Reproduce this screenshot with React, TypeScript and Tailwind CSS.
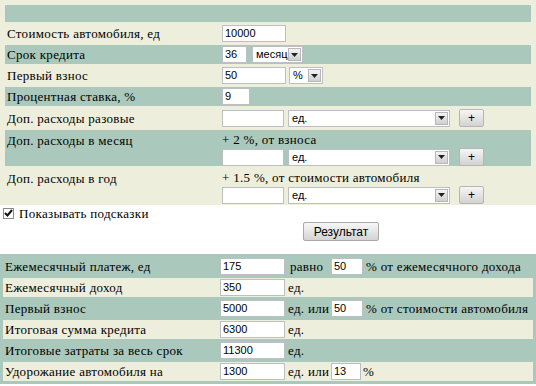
import React from "react";

const teal = "bg-[#aac8bb]";
const cream = "bg-[#eeeedd]";
const sans = "font-[Arial]";
const serif = "font-['Liberation_Serif']";

function Input({ value = "", w }: { value?: string; w: string }) {
  return (
    <div
      className={`${w} h-[17px] bg-white border border-[#bcc0c4] px-[2px] text-[11px] leading-[15px] text-black ${sans} shrink-0`}
    >
      {value}
    </div>
  );
}

function Select({ value, w }: { value: string; w: string }) {
  return (
    <div
      className={`${w} h-[17px] bg-white border border-[#bcc0c4] flex items-center justify-between pl-[3px] pr-[1px] shrink-0`}
    >
      <span className={`text-[11px] leading-[15px] ${sans} text-black`}>{value}</span>
      <span className="w-[13px] h-[13px] bg-gradient-to-b from-[#f4f4f4] to-[#cfcfcf] border border-[#b8b8b8] flex items-center justify-center">
        <svg width="7" height="4" viewBox="0 0 7 4">
          <path d="M0 0h7L3.5 4z" fill="#222" />
        </svg>
      </span>
    </div>
  );
}

function PlusBtn() {
  return (
    <div
      className={`w-[25px] h-[18px] ml-[5px] bg-gradient-to-b from-[#f6f6f6] to-[#d2d2d2] border border-[#b6b6b6] rounded-[2px] flex items-center justify-center text-[12px] ${sans} text-black shrink-0`}
    >
      +
    </div>
  );
}

function Txt({ children, cls = "" }: { children: React.ReactNode; cls?: string }) {
  return (
    <span
      className={`${serif} text-[13px] leading-[15px] tracking-[0.3px] text-black whitespace-nowrap ${cls}`}
    >
      {children}
    </span>
  );
}

function Row({
  label,
  bg,
  h = "h-[19px]",
  top = false,
  children,
}: {
  label: string;
  bg: string;
  h?: string;
  top?: boolean;
  children: React.ReactNode;
}) {
  return (
    <div className={`flex ${h} ${bg}`}>
      <div
        className={`w-[213px] shrink-0 px-[2px] flex ${top ? "items-start pt-[3px]" : "items-center"}`}
      >
        <Txt>{label}</Txt>
      </div>
      <div className="w-[3px] shrink-0" />
      <div className="flex-1 pl-[1px]">{children}</div>
    </div>
  );
}

function ExtraRow({ note, label, bg }: { note: string; label: string; bg: string }) {
  return (
    <Row label={label} bg={bg} h="h-[36px]" top>
      <div className="flex flex-col pt-[2px]">
        <div className="h-[16px] flex">
          <Txt>{note}</Txt>
        </div>
        <div className="flex items-center gap-[4px]">
          <Input w="w-[62px]" />
          <Select value="ед." w="w-[162px]" />
          <PlusBtn />
        </div>
      </div>
    </Row>
  );
}

export default function App() {
  return (
    <div className="w-[536px] h-[386px] bg-white overflow-hidden">
      <div className={`${cream} px-[5px] pt-[5px] pb-[1px] flex flex-col gap-[2px]`}>
        <div className={`h-[17px] ${teal}`} />
        <Row label="Стоимость автомобиля, ед" bg={cream}>
          <div className="h-full flex items-center">
            <Input value="10000" w="w-[64px]" />
          </div>
        </Row>
        <Row label="Срок кредита" bg={teal}>
          <div className="h-full flex items-center gap-[5px]">
            <Input value="36" w="w-[25px]" />
            <Select value="месяц" w="w-[51px]" />
          </div>
        </Row>
        <Row label="Первый взнос" bg={cream}>
          <div className="h-full flex items-center gap-[3px]">
            <Input value="50" w="w-[64px]" />
            <Select value="%" w="w-[34px]" />
          </div>
        </Row>
        <Row label="Процентная ставка, %" bg={teal}>
          <div className="h-full flex items-center">
            <Input value="9" w="w-[28px]" />
          </div>
        </Row>
        <Row label="Доп. расходы разовые" bg={cream} h="h-[20px]">
          <div className="h-full flex items-center gap-[4px]">
            <Input w="w-[62px]" />
            <Select value="ед." w="w-[162px]" />
            <PlusBtn />
          </div>
        </Row>
        <ExtraRow label="Доп. расходы в месяц" note="+ 2 %, от взноса" bg={teal} />
        <ExtraRow
          label="Доп. расходы в год"
          note="+ 1.5 %, от стоимости автомобиля"
          bg={cream}
        />
      </div>

      <div className="flex items-center gap-[5px] pl-[3px] pt-[2px] h-[14px]">
        <span className="w-[11px] h-[11px] border border-[#8a8a8a] bg-white flex items-center justify-center">
          <svg width="9" height="8" viewBox="0 0 9 8">
            <path d="M1 4l2.5 2.5L8 1" stroke="#111" strokeWidth="2" fill="none" />
          </svg>
        </span>
        <Txt>Показывать подсказки</Txt>
      </div>
      <div className="flex pl-[303px] pt-[3px]">
        <div
          className={`w-[76px] h-[19px] bg-gradient-to-b from-[#f7f7f7] to-[#d4d4d4] border border-[#a9a9a9] rounded-[2px] flex items-center justify-center text-[12px] text-black ${sans}`}
        >
          Результат
        </div>
      </div>

      <div className={`${teal} mt-[13px] p-[3px] flex flex-col gap-[2px]`}>
        <Row label="Ежемесячный платеж, ед" bg={teal}>
          <div className="h-full flex items-center">
            <Input value="175" w="w-[65px]" />
            <Txt cls="ml-[5px] w-[41px]">равно</Txt>
            <Input value="50" w="w-[32px]" />
            <Txt cls="ml-[3px]">% от ежемесячного дохода</Txt>
          </div>
        </Row>
        <Row label="Ежемесячный доход" bg={cream}>
          <div className="h-full flex items-center">
            <Input value="350" w="w-[65px]" />
            <Txt cls="ml-[3px]">ед.</Txt>
          </div>
        </Row>
        <Row label="Первый взнос" bg={teal}>
          <div className="h-full flex items-center">
            <Input value="5000" w="w-[65px]" />
            <Txt cls="ml-[3px] w-[43px]">ед. или</Txt>
            <Input value="50" w="w-[32px]" />
            <Txt cls="ml-[3px]">% от стоимости автомобиля</Txt>
          </div>
        </Row>
        <Row label="Итоговая сумма кредита" bg={cream}>
          <div className="h-full flex items-center">
            <Input value="6300" w="w-[65px]" />
            <Txt cls="ml-[3px]">ед.</Txt>
          </div>
        </Row>
        <Row label="Итоговые затраты за весь срок" bg={teal}>
          <div className="h-full flex items-center">
            <Input value="11300" w="w-[65px]" />
            <Txt cls="ml-[3px]">ед.</Txt>
          </div>
        </Row>
        <Row label="Удорожание автомобиля на" bg={cream}>
          <div className="h-full flex items-center">
            <Input value="1300" w="w-[65px]" />
            <Txt cls="ml-[3px] w-[43px]">ед. или</Txt>
            <Input value="13" w="w-[30px]" />
            <Txt cls="ml-[2px]">%</Txt>
          </div>
        </Row>
      </div>
    </div>
  );
}
